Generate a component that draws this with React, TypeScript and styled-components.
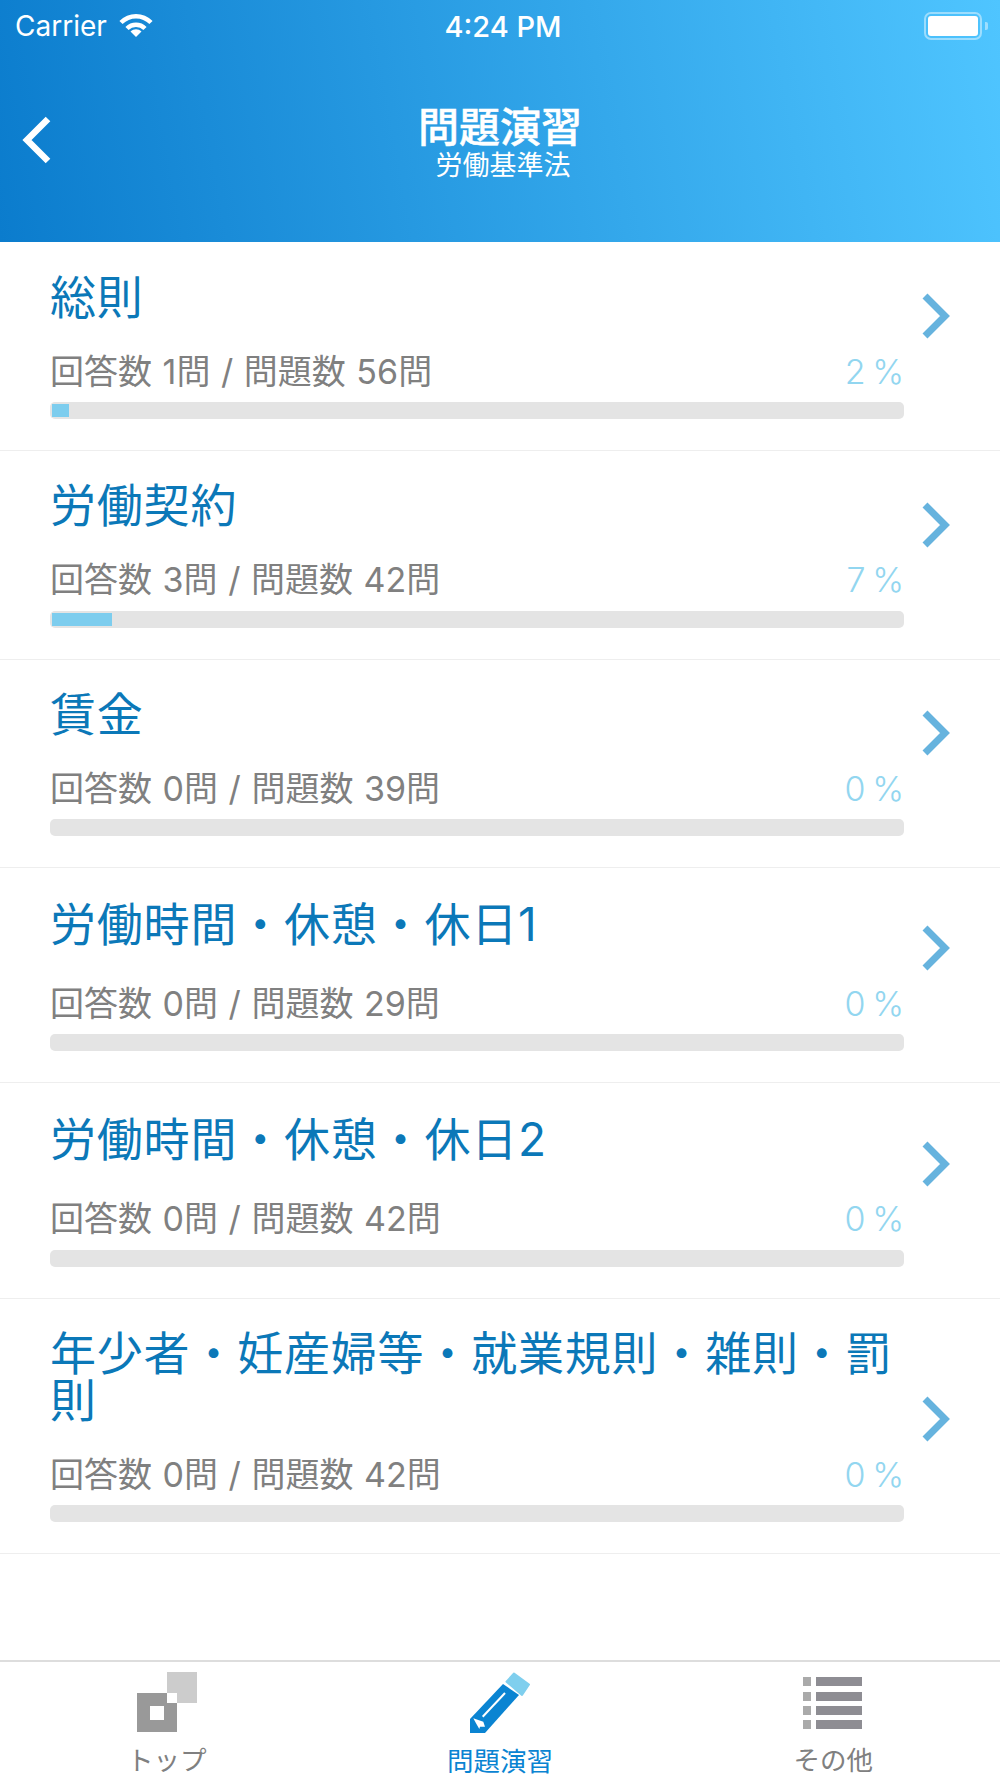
import React from "react";
import styled, { createGlobalStyle } from "styled-components";

const Global = createGlobalStyle`
  html, body { margin: 0; padding: 0; background: #fff; }
  #root { width: 1000px; height: 1778px; }
`;

const FONT = `Inter, "Liberation Sans", "Noto Sans CJK JP", sans-serif`;

const Screen = styled.div`
  width: 1000px;
  height: 1778px;
  display: flex;
  flex-direction: column;
  overflow: hidden;
  background: #fff;
  font-family: ${FONT};
`;

const Header = styled.header`
  height: 242px;
  flex: none;
  color: #fff;
  background: linear-gradient(80deg, #0b7ccd 0%, #4fc5ff 100%);
`;

const StatusBar = styled.div`
  height: 52px;
  display: grid;
  grid-template-columns: 1fr auto 1fr;
  align-items: center;
  padding: 0 12px 0 15px;
`;

const Carrier = styled.div`
  display: flex;
  align-items: center;
  gap: 12px;
  font-size: 28px;
`;

const Clock = styled.div`
  font-size: 29px;
  font-weight: 500;
  margin-left: 3px;
`;

const BatteryWrap = styled.div`
  justify-self: end;
  display: flex;
  align-items: center;
  gap: 3px;
`;

const BatteryBody = styled.div`
  width: 50px;
  height: 20px;
  padding: 2px;
  border: 2px solid rgba(255, 255, 255, 0.45);
  border-radius: 7px;
  display: flex;
`;

const BatteryLevel = styled.div`
  flex: 1;
  background: #fff;
  border-radius: 3px;
`;

const BatteryNub = styled.div`
  width: 3px;
  height: 8px;
  background: rgba(255, 255, 255, 0.45);
  border-radius: 0 2px 2px 0;
`;

const Nav = styled.div`
  display: grid;
  grid-template-columns: 1fr auto 1fr;
  padding-top: 53px;
`;

const Back = styled.svg`
  display: block;
  margin: 11px 0 0 20px;
`;

const Titles = styled.div`
  text-align: center;
`;

const NavTitle = styled.div`
  font-size: 41px;
  line-height: 44px;
  font-weight: 500;
  -webkit-text-stroke: 0.5px #fff;
`;

const NavSub = styled.div`
  font-size: 27px;
  line-height: 32px;
  padding: 1px 0 0 6px;
`;

const List = styled.main`
  flex: 1;
  min-height: 0;
  padding-top: 1px;
`;

const Row = styled.section`
  display: flex;
  padding: 31px 50px 31px 50px;
  border-bottom: 1px solid #eeeeee;
`;

const RowBody = styled.div`
  flex: 1;
  min-width: 0;
`;

const RowTitle = styled.h2<{ $extra?: boolean }>`
  margin: 0;
  padding: ${(p) => (p.$extra ? "2px 0 5px" : "0")};
  font-size: 46px;
  line-height: 47px;
  letter-spacing: 0.8px;
  font-weight: 400;
  color: #0b78b8;
`;

const Meta = styled.div`
  display: flex;
  justify-content: space-between;
  align-items: center;
  margin: 29px 0 8.330px;
  height: 44px;
  line-height: 44px;
  font-size: 34px;
  word-spacing: 1px;
  color: #808080;
`;

const Percent = styled.span`
  color: #92d6f0;
  font-weight: 300;
  word-spacing: -3px;
`;

const Track = styled.div`
  height: 17px;
  padding: 2px;
  box-sizing: border-box;
  border-radius: 5px;
  background: #e4e4e4;
`;

const Fill = styled.div`
  height: 100%;
  background: #7dcdee;
`;

const Chevron = styled.svg`
  flex: none;
  align-self: flex-end;
  margin: 0 0 80px 18px;
`;

const TabBar = styled.nav`
  flex: none;
  height: 118px;
  box-sizing: border-box;
  border-top: 2px solid #dddddd;
  display: grid;
  grid-template-columns: repeat(3, 1fr);
  background: #fff;
`;

const Tab = styled.div`
  display: flex;
  flex-direction: column;
  align-items: center;
`;

const TabIcon = styled.svg`
  display: block;
  margin-top: 10px;
`;

const TabLabel = styled.div<{ $active?: boolean }>`
  margin-top: 10px;
  font-size: 26.500px;
  line-height: 34px;
  white-space: nowrap;
  color: ${(p) => (p.$active ? "#0a84d2" : "#808080")};
`;

const WifiSvg = styled.svg`
  display: block;
  margin-top: -3px;
`;

type Item = { title: string; answered: number; total: number; pct: number; extra?: boolean };

const items: Item[] = [
  { title: "総則", answered: 1, total: 56, pct: 2 },
  { title: "労働契約", answered: 3, total: 42, pct: 7 },
  { title: "賃金", answered: 0, total: 39, pct: 0 },
  { title: "労働時間・休憩・休日1", answered: 0, total: 29, pct: 0, extra: true },
  { title: "労働時間・休憩・休日2", answered: 0, total: 42, pct: 0, extra: true },
  { title: "年少者・妊産婦等・就業規則・雑則・罰則", answered: 0, total: 42, pct: 0 },
];

const WifiIcon = () => (
  <WifiSvg width="34" height="24" viewBox="0 0 34 24">
    <path d="M2 9.500C10.500 1 23.500 1 32 9.500" fill="none" stroke="#fff" strokeWidth="4.500" />
    <path d="M8 15.500C13 10.500 21 10.500 26 15.500" fill="none" stroke="#fff" strokeWidth="4.500" />
    <path d="M11.500 18.500C15 15.500 19 15.500 22.500 18.500L17 24Z" fill="#fff" />
  </WifiSvg>
);

const PencilIcon = () => (
  <TabIcon width="60" height="62" viewBox="0 0 60 62">
    <path d="M44 1.500L59 12.500L52 23L36.500 9.700Z" fill="#7fcfee" stroke="#7fcfee" strokeWidth="2" strokeLinejoin="round" />
    <path d="M33 12L49 23L15 61H0V47Z" fill="#0a84d2" />
    <path d="M35 21L12.700 44.700" stroke="#fff" strokeWidth="2" fill="none" />
    <path d="M3.300 46.300L13.300 49.700L15 54.700L10 54.700L9.300 57L6 51.300Z" fill="#fff" />
  </TabIcon>
);

const TopIcon = () => (
  <TabIcon width="60" height="61" viewBox="0 0 60 61">
    <rect x="30" y="0" width="30" height="31" fill="#cccccc" />
    <rect x="0" y="21" width="40" height="39" fill="#999999" />
    <rect x="30" y="21" width="10" height="10" fill="#ffffff" />
    <rect x="13" y="34" width="14" height="14" fill="#ffffff" />
  </TabIcon>
);

const MenuIcon = () => (
  <TabIcon width="60" height="61" viewBox="0 0 60 61">
    {[5, 20, 34, 48].map((y) => (
      <g key={y}>
        <rect x="0" y={y} width="8" height="9" fill="#aaaaaa" />
        <rect x="13" y={y} width="46" height="9" fill="#8e8d93" />
      </g>
    ))}
  </TabIcon>
);

export default function App() {
  return (
    <Screen>
      <Global />
      <Header>
        <StatusBar>
          <Carrier>
            Carrier
            <WifiIcon />
          </Carrier>
          <Clock>4:24 PM</Clock>
          <BatteryWrap>
            <BatteryBody>
              <BatteryLevel />
            </BatteryBody>
            <BatteryNub />
          </BatteryWrap>
        </StatusBar>
        <Nav>
          <Back width="32" height="48" viewBox="0 0 32 48">
            <path d="M28 3L7 24L28 45" fill="none" stroke="#fff" strokeWidth="6.500" />
          </Back>
          <Titles>
            <NavTitle>問題演習</NavTitle>
            <NavSub>労働基準法</NavSub>
          </Titles>
        </Nav>
      </Header>
      <List>
        {items.map((it) => (
          <Row key={it.title}>
            <RowBody>
              <RowTitle $extra={it.extra}>{it.title}</RowTitle>
              <Meta>
                <span>
                  回答数 {it.answered}問 / 問題数 {it.total}問
                </span>
                <Percent>{it.pct} %</Percent>
              </Meta>
              <Track>
                <Fill style={{ width: `${it.pct}%` }} />
              </Track>
            </RowBody>
            <Chevron width="28" height="46" viewBox="0 0 28 46">
              <path d="M3 3L23 23L3 43" fill="none" stroke="#66b3de" strokeWidth="7" />
            </Chevron>
          </Row>
        ))}
      </List>
      <TabBar>
        <Tab>
          <TopIcon />
          <TabLabel>トップ</TabLabel>
        </Tab>
        <Tab>
          <PencilIcon />
          <TabLabel $active>問題演習</TabLabel>
        </Tab>
        <Tab>
          <MenuIcon />
          <TabLabel>その他</TabLabel>
        </Tab>
      </TabBar>
    </Screen>
  );
}
